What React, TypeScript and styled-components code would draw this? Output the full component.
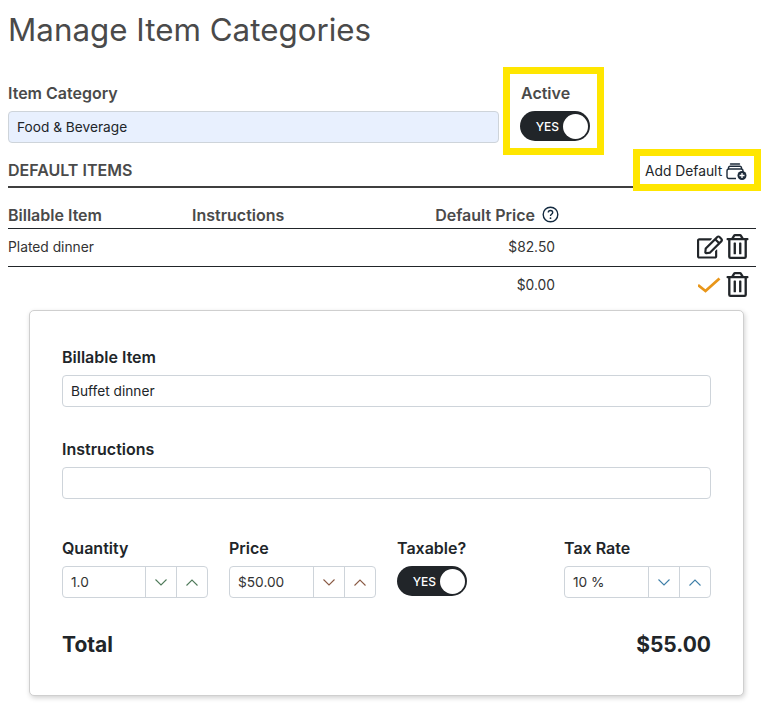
import React from "react";
import styled, { createGlobalStyle } from "styled-components";
import { FaRegEdit, FaRegTrashAlt } from "react-icons/fa";

const Global = createGlobalStyle`
  html, body { margin: 0; padding: 0; background: #fff; }
  body { font-family: "Inter", "Liberation Sans", sans-serif; color: #212529; }
  * { box-sizing: border-box; }
`;

const Page = styled.div`
  width: 765px;
  height: 710px;
  padding: 0 9px 0 8px;
  overflow: hidden;
`;

const Title = styled.h1`
  margin: 0;
  padding-top: 11px;
  height: 67px;
  font-size: 31.35px;
  line-height: 38px;
  font-weight: 400;
  color: #4a4a4a;
`;

const TopRow = styled.div`
  display: flex;
  align-items: flex-start;
  gap: 4px;
`;

const CategoryField = styled.div`
  width: 491px;
  padding-top: 18px;
`;

const Label = styled.div<{ $muted?: boolean }>`
  font-size: 16px;
  line-height: 16px;
  font-weight: 600;
  color: ${(p) => (p.$muted ? "#4a4a4a" : "#212529")};
  margin-bottom: 10px;
`;

const ActiveLabel = styled(Label)`
  margin-left: 1px;
`;

const TextInput = styled.div<{ $filled?: boolean }>`
  height: 32px;
  display: flex;
  align-items: center;
  padding: 0 8px;
  font-size: 13.7px;
  border: 1px solid #ced4da;
  border-radius: 4px;
  background: ${(p) => (p.$filled ? "#e8f0fe" : "#fff")};
  color: #212529;
`;

const Highlight = styled.div`
  border: 7px solid #ffe600;
  background: #fff;
`;

const ActiveBox = styled(Highlight)`
  width: 101px;
  height: 88px;
  padding: 11px 0 0 10px;
`;

const Toggle = styled.div`
  width: 70px;
  height: 30px;
  border-radius: 15px;
  background: #212529;
  display: flex;
  align-items: center;
  justify-content: flex-end;
  padding-right: 2px;
  gap: 4px;
  color: #fff;
  font-size: 12px;
  font-weight: 500;
`;

const Knob = styled.span`
  width: 25px;
  height: 25px;
  border-radius: 50%;
  background: #fff;
`;

const SectionHeader = styled.div`
  display: flex;
  justify-content: space-between;
  align-items: flex-start;
  height: 39px;
  margin-top: -6px;
  border-bottom: 2px solid #3f3f3f;
`;

const SectionTitle = styled.div`
  padding-top: 12px;
  font-size: 16px;
  line-height: 18px;
  font-weight: 600;
  color: #4a4a4a;
`;

const AddBox = styled(Highlight)`
  width: 128px;
  height: 42px;
  margin-right: -5px;
  display: flex;
  align-items: center;
  padding: 2px 0 0 5px;
  gap: 4px;
  font-size: 13.8px;
  color: #212529;
  position: relative;
`;

const TableGrid = styled.div`
  display: grid;
  grid-template-columns: 184px 170px 193px 1fr;
  align-items: center;
  border-bottom: 1px solid #212529;
`;

const HeadRow = styled(TableGrid)`
  height: 41px;
  padding-top: 13px;
  font-size: 16px;
  font-weight: 600;
  color: #4a4a4a;
`;

const BodyRow = styled(TableGrid)<{ $last?: boolean }>`
  height: 38px;
  padding-bottom: 2px;
  font-size: 13.8px;
  color: #333;
  ${(p) => (p.$last ? "border-bottom: none; height: 37px;" : "")}
`;

const PriceHead = styled.div`
  display: flex;
  align-items: center;
  justify-content: flex-end;
  white-space: nowrap;
  gap: 7px;
  margin-right: -4px;
`;

const PriceCell = styled.div`
  text-align: right;
`;

const Actions = styled.div`
  display: flex;
  justify-content: flex-end;
  align-items: center;
  gap: 2px;
  padding-right: 6px;
  color: #212529;
`;

const Card = styled.div`
  width: 715px;
  height: 386px;
  margin: 6px 0 0 21px;
  padding: 38px 32px 0 32px;
  background: #fff;
  border: 1px solid #cfcfcf;
  border-radius: 5px;
  box-shadow: 1px 2px 5px rgba(0, 0, 0, 0.18);
`;

const CardField = styled.div<{ $gap?: number }>`
  margin-bottom: ${(p) => p.$gap ?? 34}px;
`;

const Columns = styled.div`
  display: grid;
  grid-template-columns: 146px 147px 146px 147px;
  column-gap: 21px;
`;

const Spinner = styled.div`
  height: 32px;
  display: grid;
  grid-template-columns: 1fr 31px 31px;
  border: 1px solid #ced4da;
  border-radius: 4px;
  font-size: 13.7px;
  color: #333;
`;

const SpinValue = styled.div`
  display: flex;
  align-items: center;
  padding-left: 8px;
`;

const SpinButton = styled.div`
  display: flex;
  align-items: center;
  justify-content: center;
  border-left: 1px solid #ced4da;
`;

const TotalRow = styled.div`
  display: flex;
  justify-content: space-between;
  align-items: center;
  margin-top: 30px;
  font-size: 21px;
  line-height: 34px;
  font-weight: 700;
  color: #212529;
`;

const Chevron = ({ up, color }: { up?: boolean; color: string }) => (
  <svg width="12" height="7" viewBox="0 0 12 7" fill="none" stroke={color} strokeWidth="1.1">
    <path d={up ? "M0.5 6.5 6 1l5.5 5.5" : "M0.5 0.5 6 6l5.5-5.5"} />
  </svg>
);

const AddStackIcon = () => (
  <svg width="21" height="17" viewBox="0 0 21 17" fill="none" stroke="#1d2b3a" strokeWidth="1.4">
    <path d="M4.5 1h9" strokeLinecap="round" />
    <path d="M2.5 6V4.8a1.6 1.6 0 0 1 1.6-1.6h9.8a1.6 1.6 0 0 1 1.6 1.6V6" />
    <path d="M10 15.5H3a2 2 0 0 1-2-2V8a2 2 0 0 1 2-2h12a2 2 0 0 1 2 2v1" />
    <circle cx="16" cy="12.5" r="4.5" fill="#1d2b3a" stroke="none" />
    <path d="M13.5 12.5h5M16 10v5" stroke="#fff" strokeWidth="1.3" />
  </svg>
);

const HelpIcon = () => (
  <svg width="17" height="17" viewBox="0 0 17 17" fill="none">
    <circle cx="8.5" cy="8.5" r="7.3" stroke="#12293f" strokeWidth="1.4" />
    <path d="M6.3 6.6c0-1.3 1-2.1 2.2-2.1s2.2.8 2.2 2c0 1.9-2.2 1.7-2.2 3.4" stroke="#12293f" strokeWidth="1.4" />
    <circle cx="8.5" cy="12.2" r=".9" fill="#12293f" />
  </svg>
);

const CheckIcon = () => (
  <svg width="25" height="16" viewBox="0 0 25 16" fill="none">
    <path d="M0 8 7.5 14 21.5 1.5" stroke="#e8961a" strokeWidth="2.8" />
  </svg>
);

const Stepper = ({ value, color }: { value: string; color: string }) => (
  <Spinner>
    <SpinValue>{value}</SpinValue>
    <SpinButton><Chevron color={color} /></SpinButton>
    <SpinButton><Chevron up color={color} /></SpinButton>
  </Spinner>
);

const YesToggle = () => (
  <Toggle>
    YES
    <Knob />
  </Toggle>
);

export default function App() {
  return (
    <Page>
      <Global />
      <Title>Manage Item Categories</Title>
      <TopRow>
        <CategoryField>
          <Label $muted>Item Category</Label>
          <TextInput $filled>Food &amp; Beverage</TextInput>
        </CategoryField>
        <ActiveBox>
          <ActiveLabel $muted>Active</ActiveLabel>
          <YesToggle />
        </ActiveBox>
      </TopRow>
      <SectionHeader>
        <SectionTitle>DEFAULT ITEMS</SectionTitle>
        <AddBox>
          Add Default
          <AddStackIcon />
        </AddBox>
      </SectionHeader>
      <HeadRow>
        <div>Billable Item</div>
        <div>Instructions</div>
        <PriceHead>Default Price <HelpIcon /></PriceHead>
        <div />
      </HeadRow>
      <BodyRow>
        <div>Plated dinner</div>
        <div />
        <PriceCell>$82.50</PriceCell>
        <Actions>
          <FaRegEdit size={26} />
          <FaRegTrashAlt size={25} />
        </Actions>
      </BodyRow>
      <BodyRow $last>
        <div />
        <div />
        <PriceCell>$0.00</PriceCell>
        <Actions>
          <CheckIcon />
          <FaRegTrashAlt size={25} />
        </Actions>
      </BodyRow>
      <Card>
        <CardField>
          <Label>Billable Item</Label>
          <TextInput>Buffet dinner</TextInput>
        </CardField>
        <CardField $gap={41}>
          <Label>Instructions</Label>
          <TextInput />
        </CardField>
        <Columns>
          <div>
            <Label>Quantity</Label>
            <Stepper value="1.0" color="#4f7a5a" />
          </div>
          <div>
            <Label>Price</Label>
            <Stepper value="$50.00" color="#8a5a44" />
          </div>
          <div>
            <Label>Taxable?</Label>
            <YesToggle />
          </div>
          <div>
            <Label>Tax Rate</Label>
            <Stepper value="10 %" color="#3f7fa8" />
          </div>
        </Columns>
        <TotalRow>
          <span>Total</span>
          <span>$55.00</span>
        </TotalRow>
      </Card>
    </Page>
  );
}
